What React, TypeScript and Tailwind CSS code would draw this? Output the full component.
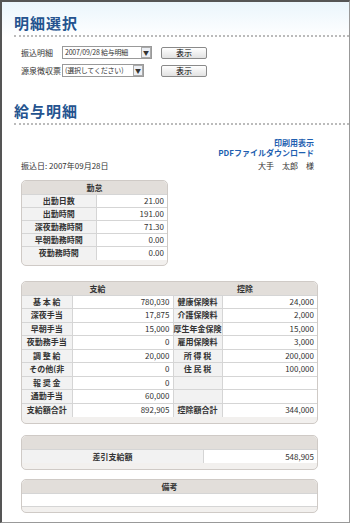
const jp = { fontFamily: '"Noto Sans CJK JP", "Liberation Sans", sans-serif' };

const attendance = [
  ["出勤日数", "21.00"],
  ["出勤時間", "191.00"],
  ["深夜勤務時間", "71.30"],
  ["早朝勤務時間", "0.00"],
  ["夜勤務時間", "0.00"],
];

const pay = [
  ["基 本 給", "780,030", "健康保険料", "24,000"],
  ["深夜手当", "17,875", "介護保険料", "2,000"],
  ["早朝手当", "15,000", "厚生年金保険", "15,000"],
  ["夜勤務手当", "0", "雇用保険料", "3,000"],
  ["調 整 給", "20,000", "所 得 税", "200,000"],
  ["その他(非", "0", "住 民 税", "100,000"],
  ["報 奨 金", "0", "", ""],
  ["通勤手当", "60,000", "", ""],
  ["支給額合計", "892,905", "控除額合計", "344,000"],
];

const Heading = ({ text }: { text: string }) => (
  <div className="pl-[12px]">
    <h2 className="text-[15px] font-bold leading-[20px] text-[#24538f] tracking-[1px]">{text}</h2>
    <div className="mt-[2px] border-b-2 border-dotted border-[#bbbbbb]" />
  </div>
);

const Row = ({ label, value, width }: { label: string; value: string; width: string }) => (
  <div className="flex items-center h-[15px] text-[8px] text-[#333]">
    <span className="w-[41px] whitespace-nowrap">{label}</span>
    <div className={`flex items-center justify-between h-[13px] border border-[#999] bg-white pl-[2px] ${width}`}>
      <span className="leading-none text-[7px] tracking-[-0.2px] whitespace-nowrap">{value}</span>
      <span className="flex shrink-0 items-center justify-center h-[11px] w-[10px] border border-[#aaa] bg-[#eceff4] text-[6px] leading-none">▼</span>
    </div>
    <button className="ml-auto mr-[142px] w-[46px] h-[12px] rounded-[2px] border border-[#8a8a8a] bg-gradient-to-b from-white to-[#e2e2e2] text-[8px] leading-none text-black">表示</button>
  </div>
);

export default function App() {
  return (
    <div style={jp} className="w-[350px] h-[523px] border-l-2 border-t-2 border-[#555] border-r border-r-[#999] border-b border-b-[#999] bg-white overflow-hidden">
      <div className="bg-gradient-to-b from-[#eaf5fc] to-white pt-[11px]">
        <Heading text="明細選択" />
      </div>
      <div className="pl-[19px] pt-[8px] flex flex-col gap-[3px]">
        <Row label="振込明細" value="2007/09/28 給与明細" width="w-[90px]" />
        <Row label="源泉徴収票" value="(選択してください)" width="w-[82px]" />
      </div>

      <div className="pt-[23px]">
        <Heading text="給与明細" />
      </div>

      <div className="pr-[35px] pt-[13px] flex flex-col items-end text-[8px] font-bold text-[#1f5fb0] leading-[10px]">
        <span>印刷用表示</span>
        <span>PDFファイルダウンロード</span>
      </div>
      <div className="flex justify-between pl-[19px] pr-[35px] pt-[3px] text-[8px] leading-[10px] text-[#333]">
        <span>振込日: 2007年09月28日</span>
        <span>大手　太郎　様</span>
      </div>

      <div className="ml-[19px] mt-[9px] w-[147px] rounded-[5px] border border-[#cfcac6] bg-[#f2f0ee] pb-[5px]">
        <div className="h-[13px] rounded-t-[5px] bg-[#e2deda] text-center text-[8px] font-bold leading-[13px] text-[#333]">勤怠</div>
        <table className="w-full border-collapse text-[8px] text-[#333]">
          <tbody>
            {attendance.map(([a, b]) => (
              <tr key={a} className="h-[13px] border-t border-[#d5d5d5]">
                <td className="w-[74px] p-0 text-center font-bold bg-[#f2f2f2] border-r border-[#d5d5d5] leading-none">{a}</td>
                <td className="p-0 text-right pr-[3px] bg-white leading-none">{b}</td>
              </tr>
            ))}
          </tbody>
        </table>
      </div>

      <div className="ml-[19px] mt-[15px] w-[297px] rounded-[5px] border border-[#cfcac6] bg-[#f2f0ee] pb-[6px]">
        <div className="flex h-[13px] rounded-t-[5px] bg-[#e2deda] text-[8px] font-bold leading-[13px] text-[#333]">
          <span className="w-[151px] text-center">支給</span>
          <span className="flex-1 text-center">控除</span>
        </div>
        <table className="w-full border-collapse text-[8px] text-[#333]">
          <tbody>
            {pay.map(([a, b, c, d]) => (
              <tr key={a} className="h-[13.5px] border-t border-[#d5d5d5]">
                <td className="w-[50px] p-0 text-center font-bold bg-[#f2f2f2] border-r border-[#d5d5d5] leading-none whitespace-pre">{a}</td>
                <td className="w-[101px] p-0 text-right pr-[3px] bg-white border-r border-[#d5d5d5] leading-none">{b}</td>
                <td className="w-[46px] p-0 text-center font-bold bg-[#f2f2f2] border-r border-[#d5d5d5] leading-none whitespace-pre">{c}</td>
                <td className="p-0 text-right pr-[3px] bg-white leading-none">{d}</td>
              </tr>
            ))}
          </tbody>
        </table>
      </div>

      <div className="ml-[19px] mt-[11px] w-[297px] rounded-[5px] border border-[#cfcac6] bg-[#f2f0ee] pb-[6px]">
        <div className="h-[13px] rounded-t-[5px] bg-[#e2deda]" />
        <div className="flex h-[14px] border-t border-[#d5d5d5] text-[8px] text-[#333] leading-[13px]">
          <span className="w-[182px] text-center font-bold bg-[#f2f2f2] border-r border-[#d5d5d5]">差引支給額</span>
          <span className="flex-1 text-right pr-[3px] bg-white">548,905</span>
        </div>
      </div>

      <div className="ml-[19px] mt-[9px] w-[297px] rounded-[5px] border border-[#cfcac6] bg-[#f2f0ee] pb-[5px]">
        <div className="h-[13px] rounded-t-[5px] bg-[#e2deda] text-center text-[8px] font-bold leading-[13px] text-[#333]">備考</div>
        <div className="h-[14px] border-t border-b border-[#d5d5d5] bg-white" />
      </div>
    </div>
  );
}
